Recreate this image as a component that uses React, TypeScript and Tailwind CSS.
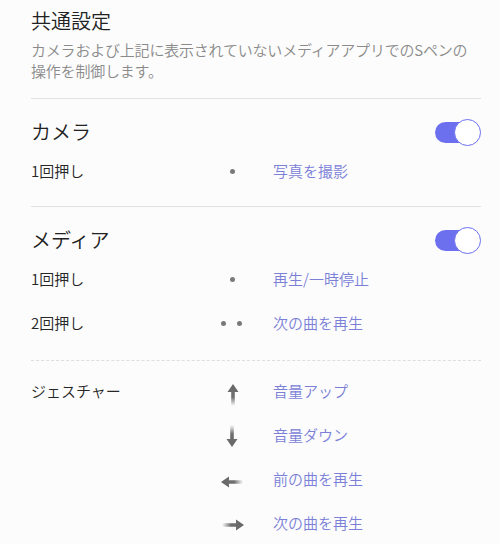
import React from "react";

const font = { fontFamily: '"Noto Sans CJK JP", "Noto Sans", sans-serif' };

function Toggle() {
  return (
    <div className="relative w-[46px] h-[27px]">
      <div className="absolute left-0 top-[3px] w-[40px] h-[21px] rounded-full bg-[#6c70ef]" />
      <div className="absolute right-0 top-0 w-[27px] h-[27px] rounded-full bg-white border-[1.5px] border-[#6c70ef]" />
    </div>
  );
}

function Dot() {
  return <div className="w-[5px] h-[5px] rounded-full bg-[#7a7a7a]" />;
}

function Arrow({ dir }: { dir: "up" | "down" | "left" | "right" }) {
  const rot = { up: 0, down: 180, left: 270, right: 90 }[dir];
  const id = `g-${dir}`;
  return (
    <svg width="28" height="28" viewBox="0 0 28 28" style={{ transform: `rotate(${rot}deg)` }}>
      <defs>
        <linearGradient id={id} x1="0" y1="0" x2="0" y2="1">
          <stop offset="0" stopColor="#666666" />
          <stop offset="0.6" stopColor="#707070" />
          <stop offset="1" stopColor="#777777" stopOpacity="0" />
        </linearGradient>
      </defs>
      <path d="M14 3 L19.5 11 L15.8 11 L15.8 25 L12.2 25 L12.2 11 L8.5 11 Z" fill={`url(#${id})`} />
    </svg>
  );
}

function Row({
  label,
  icon,
  action,
  className = "",
}: {
  label?: string;
  icon: React.ReactNode;
  action: string;
  className?: string;
}) {
  return (
    <div className={`flex items-center h-[24px] ${className}`}>
      <div className="w-[180px] text-[15px] text-[#262626] leading-[24px] font-[350]">{label}</div>
      <div className="w-[42px] h-[24px] flex items-center justify-center">{icon}</div>
      <div className="ml-[20px] text-[15px] text-[#7b7fd8] leading-[24px] font-[350]">{action}</div>
    </div>
  );
}

export default function App() {
  return (
    <div className="w-[500px] h-[544px] bg-[#fcfcfc] overflow-hidden" style={font}>
      <div className="pl-[31px] pr-[19px] pt-[7px]">
        <div className="text-[20px] leading-[28px] text-[#222222] font-[350]">共通設定</div>
        <div className="mt-[4px] text-[15px] leading-[21px] text-[#8a8a8a] tracking-[-0.2px] font-[350]">
          カメラおよび上記に表示されていないメディアアプリでのSペンの
          <br />
          操作を制御します。
        </div>
        <div className="mt-[17px] h-px bg-[#e2e2e2]" />

        <div className="mt-[19px] flex items-center justify-between h-[28px]">
          <div className="text-[20px] leading-[28px] text-[#222222] font-[350]">カメラ</div>
          <Toggle />
        </div>
        <Row className="mt-[13px]" label="1回押し" icon={<Dot />} action="写真を撮影" />
        <div className="mt-[23px] h-px bg-[#e2e2e2]" />

        <div className="mt-[19px] flex items-center justify-between h-[28px]">
          <div className="text-[20px] leading-[28px] text-[#222222] font-[350]">メディア</div>
          <Toggle />
        </div>
        <Row className="mt-[13px]" label="1回押し" icon={<Dot />} action="再生/一時停止" />
        <Row
          className="mt-[20px]"
          label="2回押し"
          icon={
            <div className="flex gap-[11px] mr-[1px]">
              <Dot />
              <Dot />
            </div>
          }
          action="次の曲を再生"
        />
        <div className="mt-[25px] border-t border-dashed border-[#dedede]" />

        <Row
          className="mt-[18px]"
          label="ジェスチャー"
          icon={<div className="mt-[8px] ml-[1px]"><Arrow dir="up" /></div>}
          action="音量アップ"
        />
        <Row
          className="mt-[20px]"
          icon={<div className="mt-[2px]"><Arrow dir="down" /></div>}
          action="音量ダウン"
        />
        <Row
          className="mt-[20px]"
          icon={<div className="mt-[6px] mr-[1px]"><Arrow dir="left" /></div>}
          action="前の曲を再生"
        />
        <Row
          className="mt-[20px]"
          icon={<div className="mt-[4px] ml-[2px]"><Arrow dir="right" /></div>}
          action="次の曲を再生"
        />
      </div>
    </div>
  );
}
